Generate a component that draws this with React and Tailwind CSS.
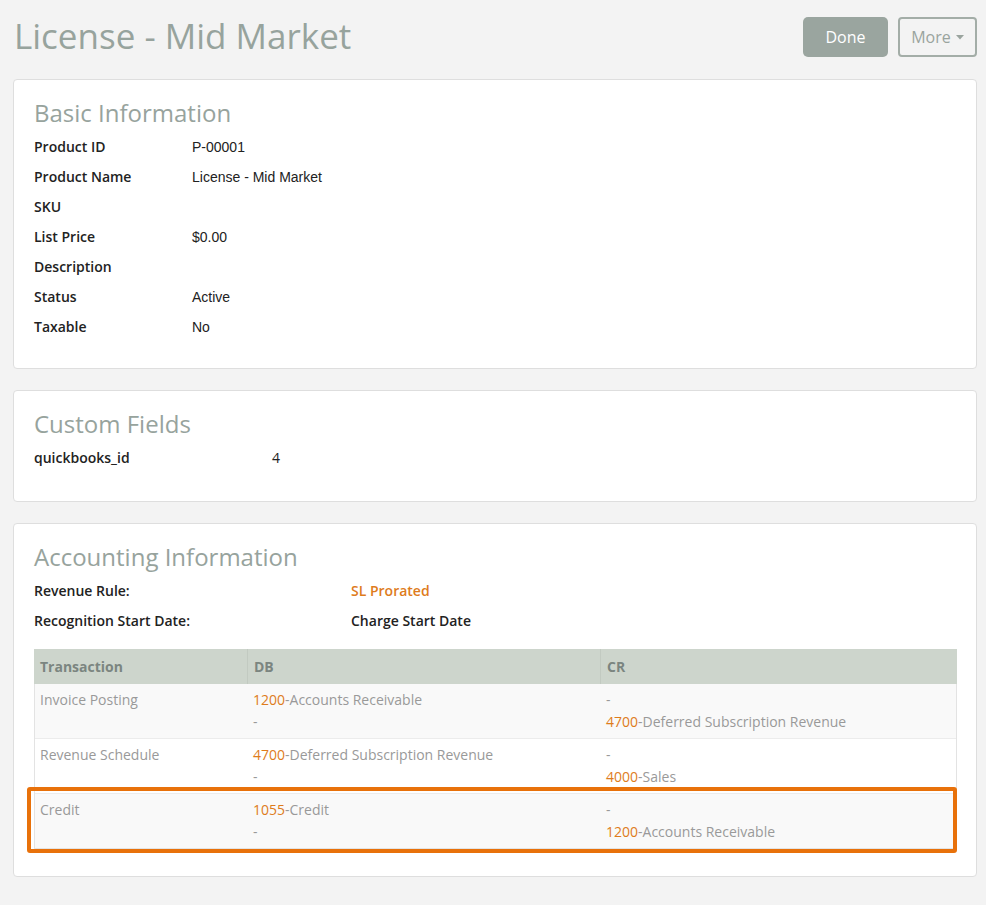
import React from "react";

const OS = { fontFamily: '"Open Sans", "Liberation Sans", sans-serif' };

function Card({ title, children, pb = "pb-[26px]" }) {
  return (
    <div className={`bg-white border border-[#dedede] rounded-[4px] pl-[20px] pr-[19px] pt-[19px] ${pb}`}>
      <h2 className="text-[24px] leading-[28px] text-[#97a39d] font-normal mb-[5px]">{title}</h2>
      {children}
    </div>
  );
}

function InfoRow({ label, value, labelW = "w-[158px]", valueFont = "helv" }) {
  return (
    <div className="flex h-[30px] leading-[30px] text-[14px]">
      <div className={`${labelW} shrink-0 font-semibold text-[#222]`}>{label}</div>
      <div
        className="text-[#222]"
        style={valueFont === "helv" ? { fontFamily: '"Liberation Sans", Arial, sans-serif' } : undefined}
      >
        {value}
      </div>
    </div>
  );
}

function Acct({ code, name }) {
  return (
    <div>
      <span className="text-[#de7c1c]">{code}</span>-{name}
    </div>
  );
}

const rows = [
  {
    t: "Invoice Posting",
    db: [<Acct code="1200" name="Accounts Receivable" />, <div>-</div>],
    cr: [<div>-</div>, <Acct code="4700" name="Deferred Subscription Revenue" />],
    bg: "bg-[#f9f9f9]",
  },
  {
    t: "Revenue Schedule",
    db: [<Acct code="4700" name="Deferred Subscription Revenue" />, <div>-</div>],
    cr: [<div>-</div>, <Acct code="4000" name="Sales" />],
    bg: "bg-white",
  },
  {
    t: "Credit",
    db: [<Acct code="1055" name="Credit" />, <div>-</div>],
    cr: [<div>-</div>, <Acct code="1200" name="Accounts Receivable" />],
    bg: "bg-[#f9f9f9]",
    hl: true,
  },
];

export default function App() {
  return (
    <div className="min-h-[905px] bg-[#f3f3f3] pl-[13px] pr-[9px] pb-[30px]" style={OS}>
      <div className="flex items-start justify-between pt-[16px]">
        <h1 className="pl-[1px] text-[35px] leading-[40px] font-normal text-[#97a39d]">License - Mid Market</h1>
        <div className="flex gap-[10px] mt-[1px]">
          <button className="h-[40px] w-[85px] rounded-[5px] bg-[#9aa59f] text-white text-[16px]">Done</button>
          <button className="h-[40px] w-[79px] rounded-[4px] border-2 border-[#a3ada7] text-[#9aa49e] text-[16px] flex items-center justify-center gap-[5px]">
            More
            <svg width="8" height="5" viewBox="0 0 8 5" className="mt-[1px]">
              <path d="M0 0 L8 0 L4 4.5 Z" fill="#9aa49e" />
            </svg>
          </button>
        </div>
      </div>

      <div className="mt-[22px] flex flex-col gap-[21px]">
        <Card title="Basic Information" pb="pb-[26px]">
          <InfoRow label="Product ID" value="P-00001" />
          <InfoRow label="Product Name" value="License - Mid Market" />
          <InfoRow label="SKU" value="" />
          <InfoRow label="List Price" value="$0.00" />
          <InfoRow label="Description" value="" />
          <InfoRow label="Status" value="Active" />
          <InfoRow label="Taxable" value="No" />
        </Card>

        <Card title="Custom Fields" pb="pb-[28px]">
          <InfoRow label="quickbooks_id" value="4" labelW="w-[238px]" valueFont="os" />
        </Card>

        <Card title="Accounting Information" pb="pb-[27px]">
          <div className="flex h-[30px] leading-[30px] text-[14px] font-semibold text-[#222]">
            <div className="w-[317px] shrink-0">Revenue Rule:</div>
            <div className="text-[#de7c1c]">SL Prorated</div>
          </div>
          <div className="flex h-[30px] leading-[30px] text-[14px] font-semibold text-[#222]">
            <div className="w-[317px] shrink-0">Recognition Start Date:</div>
            <div>Charge Start Date</div>
          </div>

          <div className="mt-[13px] text-[14px]">
            <div className="grid grid-cols-[213px_353px_1fr] bg-[#cdd5cc] h-[35px] leading-[35px] font-bold text-[#7b8580]">
              <div className="px-[6px]">Transaction</div>
              <div className="px-[6px] border-l border-[#c2cac1]">DB</div>
              <div className="px-[6px] border-l border-[#c2cac1]">CR</div>
            </div>
            <div className="border-x border-b border-[#e3e3e3]">
              {rows.map((r, i) => (
                <div
                  key={i}
                  className={`relative grid grid-cols-[212px_353px_1fr] ${r.bg} ${i > 0 ? "border-t border-[#ececec]" : ""} py-[5px] leading-[22px] text-[#999]`}
                >
                  <div className="px-[5px]">{r.t}</div>
                  <div className="px-[6px]">
                    {r.db[0]}
                    {r.db[1]}
                  </div>
                  <div className="px-[6px]">
                    {r.cr[0]}
                    {r.cr[1]}
                  </div>
                  {r.hl && (
                    <div className="absolute left-[-8px] top-[-7px] right-[-1px] bottom-[-5px] border-4 border-[#e8710a] rounded-[3px] pointer-events-none" />
                  )}
                </div>
              ))}
            </div>
          </div>
        </Card>
      </div>
    </div>
  );
}
